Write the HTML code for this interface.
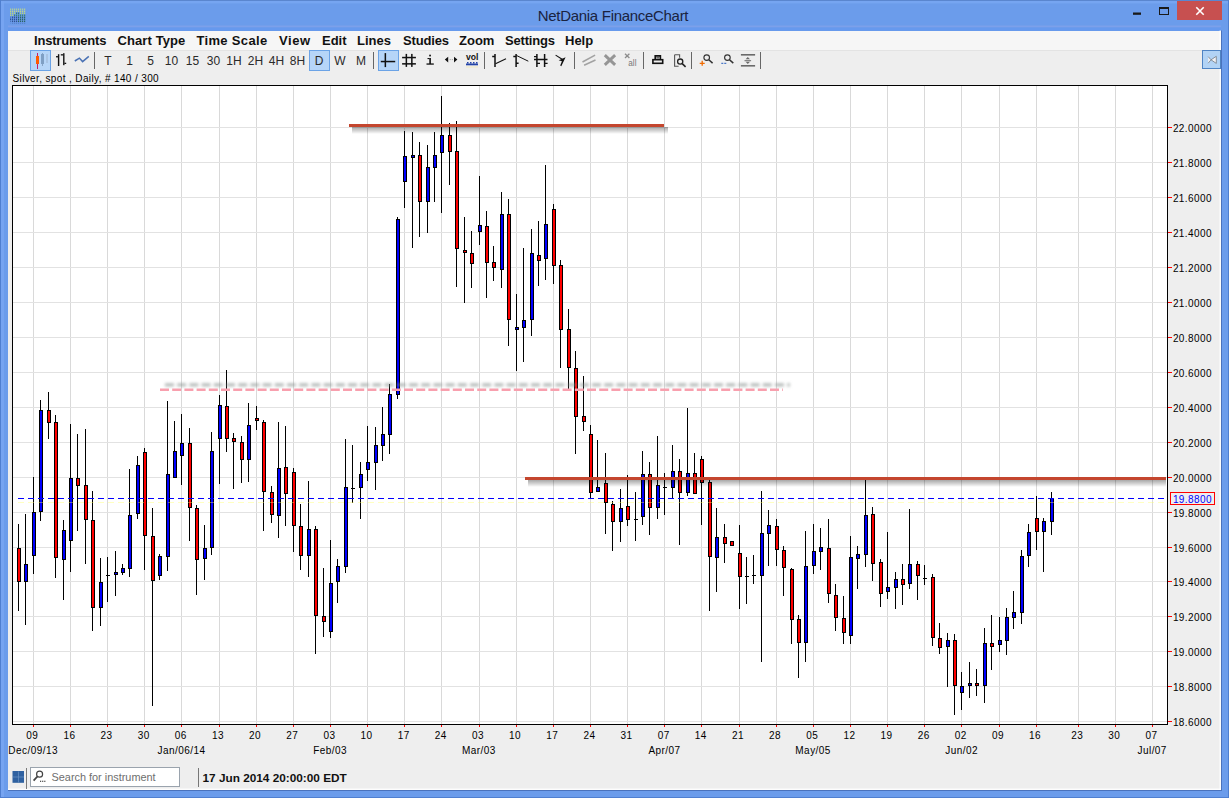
<!DOCTYPE html>
<html><head><meta charset="utf-8"><title>NetDania FinanceChart</title>
<style>
html,body{margin:0;padding:0;background:#6b9ceb;}
body{width:1229px;height:798px;position:relative;overflow:hidden;font-family:"Liberation Sans",Arial,sans-serif;}
#win{position:absolute;left:0;top:0;width:1229px;height:798px;background:#6b9ceb;}
#topedge{position:absolute;left:0;top:0;width:1229px;height:1px;background:#5a86cf;}
#title{position:absolute;left:-1.5px;top:6.7px;width:1229px;text-align:center;font-size:15px;letter-spacing:-0.3px;color:#1a2340;line-height:18px;}
#content{position:absolute;left:8px;top:30.5px;width:1213px;height:759.5px;background:#eeeeee;}
#menubar{position:absolute;left:8px;top:30.5px;width:1213px;height:19px;background:#f6f6f6;border-bottom:1px solid #e3e3e3;}
.mi{position:absolute;top:33.7px;font-weight:bold;font-size:13px;line-height:14px;color:#111;white-space:nowrap;}
.tb{position:absolute;top:53px;width:24px;text-align:center;font-size:12px;line-height:16px;color:#2a2a2a;white-space:nowrap;}
.sel{position:absolute;background:#b6d5f8;border:1px solid #6ba3e6;box-sizing:border-box;}
.sep{position:absolute;width:1px;background:#8a8a8a;}
#lbl{position:absolute;left:12.5px;top:72.5px;font-size:10px;letter-spacing:0.37px;line-height:12px;color:#000;white-space:nowrap;}
#search{position:absolute;left:30px;top:767px;width:150px;height:20px;box-sizing:border-box;background:#fff;border:1px solid #9aa3ad;}
#search span{position:absolute;left:20.5px;top:3px;font-size:10.9px;line-height:13px;color:#6e6e6e;white-space:nowrap;}
#status{position:absolute;left:202.5px;top:771px;font-weight:bold;font-size:11.8px;line-height:14px;color:#111;white-space:nowrap;}
</style></head><body>
<div id="win"></div><div id="topedge"></div>
<div id="title">NetDania FinanceChart</div>
<div id="content"></div>
<div id="menubar"></div>
<span class="mi" style="left:34px;letter-spacing:-0.2px">Instruments</span><span class="mi" style="left:117.5px;letter-spacing:0.1px">Chart Type</span><span class="mi" style="left:196.5px;letter-spacing:0.33px">Time Scale</span><span class="mi" style="left:279px;letter-spacing:0.6px">View</span><span class="mi" style="left:322px;letter-spacing:0px">Edit</span><span class="mi" style="left:357px;letter-spacing:0px">Lines</span><span class="mi" style="left:403px;letter-spacing:-0.15px">Studies</span><span class="mi" style="left:459px;letter-spacing:0px">Zoom</span><span class="mi" style="left:505px;letter-spacing:-0.2px">Settings</span><span class="mi" style="left:565px;letter-spacing:0px">Help</span>
<div class="sel" style="left:30px;top:50px;width:21px;height:21px"></div>
<div class="sel" style="left:309px;top:50px;width:21px;height:21px"></div>
<div class="sel" style="left:378px;top:50px;width:21px;height:21px"></div>
<div class="sel" style="left:1202px;top:50px;width:19px;height:19px;border-color:#4f84c4;background:#b2d3f5"></div>
<span class="tb" style="left:96px">T</span><span class="tb" style="left:117.5px">1</span><span class="tb" style="left:138.5px">5</span><span class="tb" style="left:159.5px">10</span><span class="tb" style="left:180.5px">15</span><span class="tb" style="left:201.5px">30</span><span class="tb" style="left:222px">1H</span><span class="tb" style="left:243.5px">2H</span><span class="tb" style="left:264.5px">4H</span><span class="tb" style="left:285.5px">8H</span><span class="tb" style="left:307px">D</span><span class="tb" style="left:328px">W</span><span class="tb" style="left:349px">M</span>
<div id="lbl">Silver, spot , Daily, # 140 / 300</div>
<svg width="1229" height="798" viewBox="0 0 1229 798" style="position:absolute;left:0;top:0">
<defs><linearGradient id="sh" x1="0" y1="0" x2="0" y2="1"><stop offset="0" stop-color="#000" stop-opacity="0.34"/><stop offset="0.55" stop-color="#000" stop-opacity="0.16"/><stop offset="1" stop-color="#000" stop-opacity="0"/></linearGradient><filter id="bl" filterUnits="userSpaceOnUse" x="150" y="375" width="660" height="20"><feGaussianBlur stdDeviation="1.5"/></filter></defs>
<rect x="12" y="85" width="1156" height="640" fill="#fff"/>
<g shape-rendering="crispEdges" stroke="#d9d9d9" stroke-width="1"><line x1="33.5" y1="86" x2="33.5" y2="724"/><line x1="70.5" y1="86" x2="70.5" y2="724"/><line x1="107.5" y1="86" x2="107.5" y2="724"/><line x1="144.5" y1="86" x2="144.5" y2="724"/><line x1="181.5" y1="86" x2="181.5" y2="724"/><line x1="219.5" y1="86" x2="219.5" y2="724"/><line x1="256.5" y1="86" x2="256.5" y2="724"/><line x1="293.5" y1="86" x2="293.5" y2="724"/><line x1="330.5" y1="86" x2="330.5" y2="724"/><line x1="367.5" y1="86" x2="367.5" y2="724"/><line x1="404.5" y1="86" x2="404.5" y2="724"/><line x1="441.5" y1="86" x2="441.5" y2="724"/><line x1="479.5" y1="86" x2="479.5" y2="724"/><line x1="516.5" y1="86" x2="516.5" y2="724"/><line x1="553.5" y1="86" x2="553.5" y2="724"/><line x1="590.5" y1="86" x2="590.5" y2="724"/><line x1="627.5" y1="86" x2="627.5" y2="724"/><line x1="664.5" y1="86" x2="664.5" y2="724"/><line x1="701.5" y1="86" x2="701.5" y2="724"/><line x1="739.5" y1="86" x2="739.5" y2="724"/><line x1="776.5" y1="86" x2="776.5" y2="724"/><line x1="813.5" y1="86" x2="813.5" y2="724"/><line x1="850.5" y1="86" x2="850.5" y2="724"/><line x1="887.5" y1="86" x2="887.5" y2="724"/><line x1="924.5" y1="86" x2="924.5" y2="724"/><line x1="961.5" y1="86" x2="961.5" y2="724"/><line x1="999.5" y1="86" x2="999.5" y2="724"/><line x1="1036.5" y1="86" x2="1036.5" y2="724"/><line x1="1078.5" y1="86" x2="1078.5" y2="724"/><line x1="1115.5" y1="86" x2="1115.5" y2="724"/><line x1="1152.5" y1="86" x2="1152.5" y2="724"/></g><g shape-rendering="crispEdges" stroke="#e2e2e2" stroke-width="1"><line x1="13" y1="127.5" x2="1167" y2="127.5"/><line x1="13" y1="162.5" x2="1167" y2="162.5"/><line x1="13" y1="197.5" x2="1167" y2="197.5"/><line x1="13" y1="232.5" x2="1167" y2="232.5"/><line x1="13" y1="267.5" x2="1167" y2="267.5"/><line x1="13" y1="302.5" x2="1167" y2="302.5"/><line x1="13" y1="337.5" x2="1167" y2="337.5"/><line x1="13" y1="372.5" x2="1167" y2="372.5"/><line x1="13" y1="407.5" x2="1167" y2="407.5"/><line x1="13" y1="442.5" x2="1167" y2="442.5"/><line x1="13" y1="477.5" x2="1167" y2="477.5"/><line x1="13" y1="512.5" x2="1167" y2="512.5"/><line x1="13" y1="547.5" x2="1167" y2="547.5"/><line x1="13" y1="581.5" x2="1167" y2="581.5"/><line x1="13" y1="616.5" x2="1167" y2="616.5"/><line x1="13" y1="651.5" x2="1167" y2="651.5"/><line x1="13" y1="686.5" x2="1167" y2="686.5"/><line x1="13" y1="721.5" x2="1167" y2="721.5"/></g>
<g shape-rendering="crispEdges">
<g fill="#000"><rect x="18" y="524" width="1" height="87"/><rect x="25" y="514" width="1" height="111"/><rect x="33" y="477" width="1" height="97"/><rect x="40" y="400" width="1" height="121"/><rect x="48" y="392" width="1" height="47"/><rect x="55" y="415" width="1" height="163"/><rect x="63" y="520" width="1" height="80"/><rect x="70" y="424" width="1" height="148"/><rect x="77" y="434" width="1" height="97"/><rect x="85" y="429" width="1" height="135"/><rect x="92" y="491" width="1" height="140"/><rect x="100" y="558" width="1" height="68"/><rect x="107" y="557" width="1" height="45"/><rect x="115" y="551" width="1" height="45"/><rect x="122" y="564" width="1" height="11"/><rect x="129" y="469" width="1" height="108"/><rect x="137" y="456" width="1" height="63"/><rect x="144" y="448" width="1" height="122"/><rect x="152" y="508" width="1" height="198"/><rect x="159" y="554" width="1" height="26"/><rect x="167" y="401" width="1" height="170"/><rect x="174" y="421" width="1" height="57"/><rect x="181" y="414" width="1" height="71"/><rect x="189" y="428" width="1" height="113"/><rect x="196" y="505" width="1" height="90"/><rect x="204" y="525" width="1" height="55"/><rect x="211" y="432" width="1" height="123"/><rect x="219" y="395" width="1" height="89"/><rect x="226" y="370" width="1" height="82"/><rect x="233" y="433" width="1" height="56"/><rect x="241" y="436" width="1" height="47"/><rect x="248" y="403" width="1" height="79"/><rect x="256" y="406" width="1" height="24"/><rect x="263" y="420" width="1" height="111"/><rect x="271" y="486" width="1" height="37"/><rect x="278" y="422" width="1" height="116"/><rect x="285" y="426" width="1" height="100"/><rect x="293" y="468" width="1" height="84"/><rect x="300" y="504" width="1" height="66"/><rect x="308" y="481" width="1" height="96"/><rect x="315" y="526" width="1" height="128"/><rect x="323" y="568" width="1" height="69"/><rect x="330" y="540" width="1" height="98"/><rect x="337" y="559" width="1" height="44"/><rect x="345" y="439" width="1" height="134"/><rect x="352" y="445" width="1" height="58"/><rect x="360" y="462" width="1" height="57"/><rect x="367" y="426" width="1" height="55"/><rect x="375" y="427" width="1" height="63"/><rect x="382" y="407" width="1" height="54"/><rect x="389" y="384" width="1" height="70"/><rect x="397" y="217" width="1" height="182"/><rect x="404" y="131" width="1" height="77"/><rect x="412" y="132" width="1" height="116"/><rect x="419" y="142" width="1" height="95"/><rect x="427" y="145" width="1" height="88"/><rect x="434" y="132" width="1" height="70"/><rect x="441" y="96" width="1" height="117"/><rect x="449" y="123" width="1" height="62"/><rect x="456" y="121" width="1" height="166"/><rect x="464" y="217" width="1" height="86"/><rect x="471" y="231" width="1" height="57"/><rect x="479" y="176" width="1" height="69"/><rect x="486" y="211" width="1" height="87"/><rect x="493" y="246" width="1" height="35"/><rect x="501" y="192" width="1" height="96"/><rect x="508" y="199" width="1" height="147"/><rect x="516" y="294" width="1" height="77"/><rect x="523" y="248" width="1" height="114"/><rect x="531" y="229" width="1" height="107"/><rect x="538" y="221" width="1" height="65"/><rect x="545" y="165" width="1" height="115"/><rect x="553" y="204" width="1" height="80"/><rect x="560" y="260" width="1" height="108"/><rect x="568" y="309" width="1" height="81"/><rect x="575" y="351" width="1" height="103"/><rect x="583" y="376" width="1" height="55"/><rect x="590" y="425" width="1" height="74"/><rect x="597" y="440" width="1" height="52"/><rect x="605" y="453" width="1" height="81"/><rect x="612" y="501" width="1" height="50"/><rect x="620" y="489" width="1" height="53"/><rect x="627" y="475" width="1" height="51"/><rect x="635" y="492" width="1" height="49"/><rect x="642" y="451" width="1" height="74"/><rect x="649" y="462" width="1" height="73"/><rect x="657" y="436" width="1" height="83"/><rect x="664" y="473" width="1" height="42"/><rect x="672" y="445" width="1" height="53"/><rect x="679" y="459" width="1" height="86"/><rect x="687" y="408" width="1" height="88"/><rect x="694" y="453" width="1" height="41"/><rect x="701" y="456" width="1" height="69"/><rect x="709" y="480" width="1" height="131"/><rect x="716" y="508" width="1" height="84"/><rect x="724" y="524" width="1" height="39"/><rect x="731" y="541" width="1" height="5"/><rect x="739" y="525" width="1" height="84"/><rect x="746" y="557" width="1" height="47"/><rect x="753" y="555" width="1" height="29"/><rect x="761" y="491" width="1" height="171"/><rect x="768" y="510" width="1" height="56"/><rect x="776" y="519" width="1" height="47"/><rect x="783" y="546" width="1" height="50"/><rect x="791" y="568" width="1" height="76"/><rect x="798" y="615" width="1" height="63"/><rect x="805" y="531" width="1" height="131"/><rect x="813" y="524" width="1" height="50"/><rect x="820" y="528" width="1" height="42"/><rect x="828" y="519" width="1" height="84"/><rect x="835" y="584" width="1" height="47"/><rect x="843" y="596" width="1" height="48"/><rect x="850" y="536" width="1" height="108"/><rect x="857" y="546" width="1" height="43"/><rect x="865" y="480" width="1" height="87"/><rect x="872" y="507" width="1" height="74"/><rect x="880" y="559" width="1" height="48"/><rect x="887" y="532" width="1" height="67"/><rect x="895" y="572" width="1" height="37"/><rect x="902" y="564" width="1" height="41"/><rect x="909" y="509" width="1" height="80"/><rect x="917" y="561" width="1" height="39"/><rect x="924" y="565" width="1" height="20"/><rect x="932" y="574" width="1" height="72"/><rect x="939" y="623" width="1" height="31"/><rect x="947" y="633" width="1" height="54"/><rect x="954" y="634" width="1" height="81"/><rect x="961" y="672" width="1" height="38"/><rect x="969" y="662" width="1" height="36"/><rect x="976" y="669" width="1" height="27"/><rect x="984" y="628" width="1" height="75"/><rect x="991" y="615" width="1" height="55"/><rect x="999" y="617" width="1" height="35"/><rect x="1006" y="608" width="1" height="47"/><rect x="1013" y="591" width="1" height="38"/><rect x="1021" y="550" width="1" height="74"/><rect x="1028" y="524" width="1" height="43"/><rect x="1036" y="496" width="1" height="54"/><rect x="1043" y="518" width="1" height="54"/><rect x="1051" y="492" width="1" height="43"/><rect x="17" y="548" width="4" height="34"/><rect x="24" y="564" width="4" height="18"/><rect x="32" y="512" width="4" height="44"/><rect x="39" y="410" width="4" height="102"/><rect x="47" y="410" width="4" height="13"/><rect x="54" y="422" width="4" height="136"/><rect x="62" y="530" width="4" height="30"/><rect x="69" y="478" width="4" height="63"/><rect x="76" y="478" width="4" height="8"/><rect x="84" y="485" width="4" height="35"/><rect x="91" y="520" width="4" height="88"/><rect x="99" y="582" width="4" height="26"/><rect x="106" y="575" width="4" height="1"/><rect x="114" y="572" width="4" height="3"/><rect x="121" y="568" width="4" height="5"/><rect x="128" y="515" width="4" height="54"/><rect x="136" y="465" width="4" height="49"/><rect x="143" y="452" width="4" height="84"/><rect x="151" y="536" width="4" height="45"/><rect x="158" y="556" width="4" height="20"/><rect x="166" y="474" width="4" height="83"/><rect x="173" y="451" width="4" height="27"/><rect x="180" y="443" width="4" height="13"/><rect x="188" y="443" width="4" height="65"/><rect x="195" y="508" width="4" height="52"/><rect x="203" y="548" width="4" height="11"/><rect x="210" y="451" width="4" height="97"/><rect x="218" y="405" width="4" height="34"/><rect x="225" y="406" width="4" height="33"/><rect x="232" y="438" width="4" height="4"/><rect x="240" y="442" width="4" height="18"/><rect x="247" y="425" width="4" height="35"/><rect x="255" y="418" width="4" height="3"/><rect x="262" y="422" width="4" height="70"/><rect x="270" y="492" width="4" height="23"/><rect x="277" y="468" width="4" height="48"/><rect x="284" y="467" width="4" height="27"/><rect x="292" y="472" width="4" height="54"/><rect x="299" y="526" width="4" height="30"/><rect x="307" y="529" width="4" height="27"/><rect x="314" y="529" width="4" height="87"/><rect x="322" y="616" width="4" height="6"/><rect x="329" y="583" width="4" height="49"/><rect x="336" y="566" width="4" height="16"/><rect x="344" y="487" width="4" height="80"/><rect x="351" y="488" width="4" height="1"/><rect x="359" y="474" width="4" height="14"/><rect x="366" y="462" width="4" height="8"/><rect x="374" y="445" width="4" height="18"/><rect x="381" y="434" width="4" height="12"/><rect x="388" y="394" width="4" height="41"/><rect x="396" y="219" width="4" height="176"/><rect x="403" y="156" width="4" height="26"/><rect x="411" y="155" width="4" height="3"/><rect x="418" y="155" width="4" height="47"/><rect x="426" y="167" width="4" height="35"/><rect x="433" y="155" width="4" height="13"/><rect x="440" y="135" width="4" height="18"/><rect x="448" y="135" width="4" height="17"/><rect x="455" y="151" width="4" height="98"/><rect x="463" y="250" width="4" height="3"/><rect x="470" y="253" width="4" height="11"/><rect x="478" y="225" width="4" height="7"/><rect x="485" y="226" width="4" height="37"/><rect x="492" y="262" width="4" height="6"/><rect x="500" y="214" width="4" height="56"/><rect x="507" y="214" width="4" height="106"/><rect x="515" y="327" width="4" height="3"/><rect x="522" y="320" width="4" height="8"/><rect x="530" y="253" width="4" height="67"/><rect x="537" y="255" width="4" height="6"/><rect x="544" y="224" width="4" height="35"/><rect x="552" y="209" width="4" height="57"/><rect x="559" y="265" width="4" height="65"/><rect x="567" y="329" width="4" height="39"/><rect x="574" y="368" width="4" height="49"/><rect x="582" y="416" width="4" height="6"/><rect x="589" y="434" width="4" height="59"/><rect x="596" y="487" width="4" height="5"/><rect x="604" y="483" width="4" height="20"/><rect x="611" y="504" width="4" height="18"/><rect x="619" y="508" width="4" height="14"/><rect x="626" y="506" width="4" height="14"/><rect x="634" y="519" width="4" height="1"/><rect x="641" y="474" width="4" height="43"/><rect x="648" y="474" width="4" height="34"/><rect x="656" y="485" width="4" height="23"/><rect x="663" y="487" width="4" height="1"/><rect x="671" y="471" width="4" height="17"/><rect x="678" y="471" width="4" height="22"/><rect x="686" y="473" width="4" height="20"/><rect x="693" y="473" width="4" height="21"/><rect x="700" y="459" width="4" height="24"/><rect x="708" y="482" width="4" height="75"/><rect x="715" y="537" width="4" height="21"/><rect x="723" y="537" width="4" height="7"/><rect x="730" y="541" width="4" height="5"/><rect x="738" y="553" width="4" height="24"/><rect x="745" y="576" width="4" height="1"/><rect x="752" y="575" width="4" height="1"/><rect x="760" y="533" width="4" height="43"/><rect x="767" y="525" width="4" height="9"/><rect x="775" y="526" width="4" height="24"/><rect x="782" y="550" width="4" height="18"/><rect x="790" y="569" width="4" height="51"/><rect x="797" y="619" width="4" height="24"/><rect x="804" y="566" width="4" height="77"/><rect x="812" y="551" width="4" height="15"/><rect x="819" y="547" width="4" height="5"/><rect x="827" y="548" width="4" height="46"/><rect x="834" y="595" width="4" height="23"/><rect x="842" y="618" width="4" height="15"/><rect x="849" y="557" width="4" height="79"/><rect x="856" y="554" width="4" height="5"/><rect x="864" y="515" width="4" height="40"/><rect x="871" y="514" width="4" height="50"/><rect x="879" y="562" width="4" height="32"/><rect x="886" y="587" width="4" height="5"/><rect x="894" y="579" width="4" height="9"/><rect x="901" y="579" width="4" height="6"/><rect x="908" y="564" width="4" height="20"/><rect x="916" y="564" width="4" height="12"/><rect x="923" y="578" width="4" height="1"/><rect x="931" y="577" width="4" height="61"/><rect x="938" y="638" width="4" height="10"/><rect x="946" y="640" width="4" height="7"/><rect x="953" y="640" width="4" height="46"/><rect x="960" y="686" width="4" height="7"/><rect x="968" y="683" width="4" height="3"/><rect x="975" y="683" width="4" height="3"/><rect x="983" y="643" width="4" height="43"/><rect x="990" y="643" width="4" height="4"/><rect x="998" y="640" width="4" height="5"/><rect x="1005" y="617" width="4" height="24"/><rect x="1012" y="612" width="4" height="6"/><rect x="1020" y="556" width="4" height="57"/><rect x="1027" y="532" width="4" height="24"/><rect x="1035" y="518" width="4" height="14"/><rect x="1042" y="521" width="4" height="11"/><rect x="1050" y="498" width="4" height="24"/></g>
<g fill="#ff0000"><rect x="18" y="549" width="2" height="32"/><rect x="48" y="411" width="2" height="11"/><rect x="55" y="423" width="2" height="134"/><rect x="77" y="479" width="2" height="6"/><rect x="85" y="486" width="2" height="33"/><rect x="92" y="521" width="2" height="86"/><rect x="144" y="453" width="2" height="82"/><rect x="152" y="537" width="2" height="43"/><rect x="189" y="444" width="2" height="63"/><rect x="196" y="509" width="2" height="50"/><rect x="226" y="407" width="2" height="31"/><rect x="233" y="439" width="2" height="2"/><rect x="241" y="443" width="2" height="16"/><rect x="256" y="419" width="2" height="1"/><rect x="263" y="423" width="2" height="68"/><rect x="271" y="493" width="2" height="21"/><rect x="285" y="468" width="2" height="25"/><rect x="293" y="473" width="2" height="52"/><rect x="300" y="527" width="2" height="28"/><rect x="315" y="530" width="2" height="85"/><rect x="323" y="617" width="2" height="4"/><rect x="419" y="156" width="2" height="45"/><rect x="449" y="136" width="2" height="15"/><rect x="456" y="152" width="2" height="96"/><rect x="464" y="251" width="2" height="1"/><rect x="471" y="254" width="2" height="9"/><rect x="486" y="227" width="2" height="35"/><rect x="493" y="263" width="2" height="4"/><rect x="508" y="215" width="2" height="104"/><rect x="538" y="256" width="2" height="4"/><rect x="553" y="210" width="2" height="55"/><rect x="560" y="266" width="2" height="63"/><rect x="568" y="330" width="2" height="37"/><rect x="575" y="369" width="2" height="47"/><rect x="583" y="417" width="2" height="4"/><rect x="590" y="435" width="2" height="57"/><rect x="605" y="484" width="2" height="18"/><rect x="612" y="505" width="2" height="16"/><rect x="627" y="507" width="2" height="12"/><rect x="649" y="475" width="2" height="32"/><rect x="679" y="472" width="2" height="20"/><rect x="694" y="474" width="2" height="19"/><rect x="701" y="460" width="2" height="22"/><rect x="709" y="483" width="2" height="73"/><rect x="724" y="538" width="2" height="5"/><rect x="731" y="542" width="2" height="3"/><rect x="739" y="554" width="2" height="22"/><rect x="776" y="527" width="2" height="22"/><rect x="783" y="551" width="2" height="16"/><rect x="791" y="570" width="2" height="49"/><rect x="798" y="620" width="2" height="22"/><rect x="828" y="549" width="2" height="44"/><rect x="835" y="596" width="2" height="21"/><rect x="843" y="619" width="2" height="13"/><rect x="872" y="515" width="2" height="48"/><rect x="880" y="563" width="2" height="30"/><rect x="902" y="580" width="2" height="4"/><rect x="917" y="565" width="2" height="10"/><rect x="932" y="578" width="2" height="59"/><rect x="939" y="639" width="2" height="8"/><rect x="954" y="641" width="2" height="44"/><rect x="976" y="684" width="2" height="1"/><rect x="991" y="644" width="2" height="2"/><rect x="1036" y="519" width="2" height="12"/></g>
<g fill="#0000ff"><rect x="25" y="565" width="2" height="16"/><rect x="33" y="513" width="2" height="42"/><rect x="40" y="411" width="2" height="100"/><rect x="63" y="531" width="2" height="28"/><rect x="70" y="479" width="2" height="61"/><rect x="100" y="583" width="2" height="24"/><rect x="115" y="573" width="2" height="1"/><rect x="122" y="569" width="2" height="3"/><rect x="129" y="516" width="2" height="52"/><rect x="137" y="466" width="2" height="47"/><rect x="159" y="557" width="2" height="18"/><rect x="167" y="475" width="2" height="81"/><rect x="174" y="452" width="2" height="25"/><rect x="181" y="444" width="2" height="11"/><rect x="204" y="549" width="2" height="9"/><rect x="211" y="452" width="2" height="95"/><rect x="219" y="406" width="2" height="32"/><rect x="248" y="426" width="2" height="33"/><rect x="278" y="469" width="2" height="46"/><rect x="308" y="530" width="2" height="25"/><rect x="330" y="584" width="2" height="47"/><rect x="337" y="567" width="2" height="14"/><rect x="345" y="488" width="2" height="78"/><rect x="360" y="475" width="2" height="12"/><rect x="367" y="463" width="2" height="6"/><rect x="375" y="446" width="2" height="16"/><rect x="382" y="435" width="2" height="10"/><rect x="389" y="395" width="2" height="39"/><rect x="397" y="220" width="2" height="174"/><rect x="404" y="157" width="2" height="24"/><rect x="412" y="156" width="2" height="1"/><rect x="427" y="168" width="2" height="33"/><rect x="434" y="156" width="2" height="11"/><rect x="441" y="136" width="2" height="16"/><rect x="479" y="226" width="2" height="5"/><rect x="501" y="215" width="2" height="54"/><rect x="516" y="328" width="2" height="1"/><rect x="523" y="321" width="2" height="6"/><rect x="531" y="254" width="2" height="65"/><rect x="545" y="225" width="2" height="33"/><rect x="597" y="488" width="2" height="3"/><rect x="620" y="509" width="2" height="12"/><rect x="642" y="475" width="2" height="41"/><rect x="657" y="486" width="2" height="21"/><rect x="672" y="472" width="2" height="15"/><rect x="687" y="474" width="2" height="18"/><rect x="716" y="538" width="2" height="19"/><rect x="761" y="534" width="2" height="41"/><rect x="768" y="526" width="2" height="7"/><rect x="805" y="567" width="2" height="75"/><rect x="813" y="552" width="2" height="13"/><rect x="820" y="548" width="2" height="3"/><rect x="850" y="558" width="2" height="77"/><rect x="857" y="555" width="2" height="3"/><rect x="865" y="516" width="2" height="38"/><rect x="887" y="588" width="2" height="3"/><rect x="895" y="580" width="2" height="7"/><rect x="909" y="565" width="2" height="18"/><rect x="947" y="641" width="2" height="5"/><rect x="961" y="687" width="2" height="5"/><rect x="969" y="684" width="2" height="1"/><rect x="984" y="644" width="2" height="41"/><rect x="999" y="641" width="2" height="3"/><rect x="1006" y="618" width="2" height="22"/><rect x="1013" y="613" width="2" height="4"/><rect x="1021" y="557" width="2" height="55"/><rect x="1028" y="533" width="2" height="22"/><rect x="1043" y="522" width="2" height="9"/><rect x="1051" y="499" width="2" height="22"/></g>
</g>
<rect x="352" y="127" width="316" height="7" fill="url(#sh)"/>
<rect x="349" y="124" width="315" height="3" fill="#c4462e"/>
<rect x="528" y="480" width="638" height="7" fill="url(#sh)"/>
<rect x="525" y="477" width="641" height="3" fill="#c4462e"/>
<line x1="165" y1="384.9" x2="790" y2="384.9" stroke="#868f8c" stroke-opacity="0.6" stroke-width="3.2" stroke-dasharray="9 3.2" filter="url(#bl)"/>
<line x1="160" y1="389.7" x2="783" y2="389.7" stroke="#f8a0ae" stroke-width="2.6" stroke-dasharray="9 3.2"/>
<line x1="18" y1="502.5" x2="1166" y2="502.5" stroke="#ffff66" stroke-opacity="0.4" stroke-width="1" stroke-dasharray="6 4" shape-rendering="crispEdges"/>
<line x1="18" y1="498.5" x2="1166" y2="498.5" stroke="#0000ff" stroke-width="1" stroke-dasharray="6 4" shape-rendering="crispEdges"/>
<g shape-rendering="crispEdges" fill="#000"><rect x="12" y="85" width="1156" height="1"/><rect x="12" y="724" width="1156" height="1"/><rect x="12" y="85" width="1" height="640"/><rect x="1167" y="85" width="1" height="640"/></g>
<g shape-rendering="crispEdges" fill="#ff0000"><rect x="1168" y="127" width="4" height="1"/><rect x="1168" y="162" width="4" height="1"/><rect x="1168" y="197" width="4" height="1"/><rect x="1168" y="232" width="4" height="1"/><rect x="1168" y="267" width="4" height="1"/><rect x="1168" y="302" width="4" height="1"/><rect x="1168" y="337" width="4" height="1"/><rect x="1168" y="372" width="4" height="1"/><rect x="1168" y="407" width="4" height="1"/><rect x="1168" y="442" width="4" height="1"/><rect x="1168" y="477" width="4" height="1"/><rect x="1168" y="512" width="4" height="1"/><rect x="1168" y="547" width="4" height="1"/><rect x="1168" y="581" width="4" height="1"/><rect x="1168" y="616" width="4" height="1"/><rect x="1168" y="651" width="4" height="1"/><rect x="1168" y="686" width="4" height="1"/><rect x="1168" y="721" width="4" height="1"/><rect x="33" y="725" width="1" height="2"/><rect x="70" y="725" width="1" height="2"/><rect x="107" y="725" width="1" height="2"/><rect x="144" y="725" width="1" height="2"/><rect x="181" y="725" width="1" height="2"/><rect x="219" y="725" width="1" height="2"/><rect x="256" y="725" width="1" height="2"/><rect x="293" y="725" width="1" height="2"/><rect x="330" y="725" width="1" height="2"/><rect x="367" y="725" width="1" height="2"/><rect x="404" y="725" width="1" height="2"/><rect x="441" y="725" width="1" height="2"/><rect x="479" y="725" width="1" height="2"/><rect x="516" y="725" width="1" height="2"/><rect x="553" y="725" width="1" height="2"/><rect x="590" y="725" width="1" height="2"/><rect x="627" y="725" width="1" height="2"/><rect x="664" y="725" width="1" height="2"/><rect x="701" y="725" width="1" height="2"/><rect x="739" y="725" width="1" height="2"/><rect x="776" y="725" width="1" height="2"/><rect x="813" y="725" width="1" height="2"/><rect x="850" y="725" width="1" height="2"/><rect x="887" y="725" width="1" height="2"/><rect x="924" y="725" width="1" height="2"/><rect x="961" y="725" width="1" height="2"/><rect x="999" y="725" width="1" height="2"/><rect x="1036" y="725" width="1" height="2"/><rect x="1078" y="725" width="1" height="2"/><rect x="1115" y="725" width="1" height="2"/><rect x="1152" y="725" width="1" height="2"/></g>
<g font-family="Liberation Sans, Arial, sans-serif" font-size="10" letter-spacing="0.42" fill="#000"><text x="1172.9" y="132.0">22.0000</text><text x="1172.9" y="167.0">21.8000</text><text x="1172.9" y="202.0">21.6000</text><text x="1172.9" y="237.0">21.4000</text><text x="1172.9" y="272.0">21.2000</text><text x="1172.9" y="307.0">21.0000</text><text x="1172.9" y="342.0">20.8000</text><text x="1172.9" y="377.0">20.6000</text><text x="1172.9" y="412.0">20.4000</text><text x="1172.9" y="447.0">20.2000</text><text x="1172.9" y="482.0">20.0000</text><text x="1172.9" y="517.0">19.8000</text><text x="1172.9" y="552.0">19.6000</text><text x="1172.9" y="586.0">19.4000</text><text x="1172.9" y="621.0">19.2000</text><text x="1172.9" y="656.0">19.0000</text><text x="1172.9" y="691.0">18.8000</text><text x="1172.9" y="726.0">18.6000</text><text x="32.3" y="738.6" text-anchor="middle">09</text><text x="33.1" y="753.6" text-anchor="middle" letter-spacing="0.45">Dec/09/13</text><text x="69.4" y="738.6" text-anchor="middle">16</text><text x="106.5" y="738.6" text-anchor="middle">23</text><text x="143.7" y="738.6" text-anchor="middle">30</text><text x="180.8" y="738.6" text-anchor="middle">06</text><text x="181.6" y="753.6" text-anchor="middle" letter-spacing="0.45">Jan/06/14</text><text x="218.0" y="738.6" text-anchor="middle">13</text><text x="255.1" y="738.6" text-anchor="middle">20</text><text x="292.3" y="738.6" text-anchor="middle">27</text><text x="329.4" y="738.6" text-anchor="middle">03</text><text x="330.2" y="753.6" text-anchor="middle" letter-spacing="0.45">Feb/03</text><text x="366.5" y="738.6" text-anchor="middle">10</text><text x="403.7" y="738.6" text-anchor="middle">17</text><text x="440.8" y="738.6" text-anchor="middle">24</text><text x="478.0" y="738.6" text-anchor="middle">03</text><text x="478.8" y="753.6" text-anchor="middle" letter-spacing="0.45">Mar/03</text><text x="515.1" y="738.6" text-anchor="middle">10</text><text x="552.3" y="738.6" text-anchor="middle">17</text><text x="589.4" y="738.6" text-anchor="middle">24</text><text x="626.5" y="738.6" text-anchor="middle">31</text><text x="663.7" y="738.6" text-anchor="middle">07</text><text x="664.5" y="753.6" text-anchor="middle" letter-spacing="0.45">Apr/07</text><text x="700.8" y="738.6" text-anchor="middle">14</text><text x="738.0" y="738.6" text-anchor="middle">21</text><text x="775.1" y="738.6" text-anchor="middle">28</text><text x="812.3" y="738.6" text-anchor="middle">05</text><text x="813.1" y="753.6" text-anchor="middle" letter-spacing="0.45">May/05</text><text x="849.4" y="738.6" text-anchor="middle">12</text><text x="886.5" y="738.6" text-anchor="middle">19</text><text x="923.7" y="738.6" text-anchor="middle">26</text><text x="960.8" y="738.6" text-anchor="middle">02</text><text x="961.6" y="753.6" text-anchor="middle" letter-spacing="0.45">Jun/02</text><text x="998.0" y="738.6" text-anchor="middle">09</text><text x="1035.1" y="738.6" text-anchor="middle">16</text><text x="1077.2" y="738.6" text-anchor="middle">23</text><text x="1114.2" y="738.6" text-anchor="middle">30</text><text x="1151.4" y="738.6" text-anchor="middle">07</text><text x="1152.2" y="753.6" text-anchor="middle" letter-spacing="0.45">Jul/07</text></g>
<rect x="1170.5" y="492.5" width="44" height="12" fill="#eeeeee" stroke="#ff0000" stroke-width="1" shape-rendering="crispEdges"/>
<text x="1172.9" y="503.0" font-family="Liberation Sans, Arial, sans-serif" font-size="10" letter-spacing="0.42" fill="#0000ff">19.8800</text>
</svg>
<div id="search"><span>Search for instrument</span></div>
<div id="status">17 Jun 2014 20:00:00 EDT</div>
<svg width="1229" height="798" viewBox="0 0 1229 798" style="position:absolute;left:0;top:0;pointer-events:none">
<!-- window border shading -->
<rect x="1" y="1" width="1227" height="2.500" fill="#7aa8f3" opacity="0.75"/><rect x="1" y="1" width="3" height="796" fill="#7aa8f3" opacity="0.7"/><rect x="8" y="25.500" width="1213" height="2" fill="#8aa4ea" opacity="0.55"/>
<rect x="8" y="27.500" width="1213" height="3" fill="#6298f0" opacity="0.6"/>
<rect x="1228" y="0" width="1" height="798" fill="#4f7fd0"/>
<rect x="0" y="797" width="1229" height="1" fill="#4f7fd0"/>
<rect x="0" y="0" width="1" height="798" fill="#4f7fd0"/>
<rect x="1219.500" y="30.500" width="1.500" height="19.500" fill="#fff" opacity="0.85"/><rect x="1219.500" y="69" width="1.500" height="721" fill="#fff" opacity="0.85"/><rect x="8" y="788.500" width="1213" height="1.500" fill="#fff" opacity="0.85"/>
<rect x="1221" y="30.500" width="1" height="760.500" fill="#4a72bc"/><rect x="8" y="790" width="1214" height="1" fill="#4a72bc"/>
<!-- app icon -->
<g><rect x="10.0" y="8.6" width="1.2" height="1.2" fill="#d6ea70" opacity="0.8"/><rect x="12.0" y="8.6" width="1.2" height="1.2" fill="#d6ea70" opacity="0.8"/><rect x="14.0" y="8.6" width="1.2" height="1.2" fill="#d6ea70" opacity="0.8"/><rect x="16.0" y="8.6" width="1.2" height="1.2" fill="#d6ea70" opacity="0.8"/><rect x="18.0" y="8.6" width="1.2" height="1.2" fill="#d6ea70" opacity="0.8"/><rect x="20.0" y="8.6" width="1.2" height="1.2" fill="#d6ea70" opacity="0.8"/><rect x="22.0" y="8.6" width="1.2" height="1.2" fill="#d6ea70" opacity="0.8"/><rect x="24.0" y="8.6" width="1.2" height="1.2" fill="#d6ea70" opacity="0.8"/><rect x="10.0" y="10.6" width="1.2" height="1.2" fill="#d6ea70" opacity="0.95"/><rect x="12.0" y="10.6" width="1.2" height="1.2" fill="#d6ea70" opacity="0.95"/><rect x="14.0" y="10.6" width="1.2" height="1.2" fill="#d6ea70" opacity="0.95"/><rect x="16.0" y="10.6" width="1.2" height="1.2" fill="#d6ea70" opacity="0.95"/><rect x="18.0" y="10.6" width="1.2" height="1.2" fill="#d6ea70" opacity="0.95"/><rect x="20.0" y="10.6" width="1.2" height="1.2" fill="#d6ea70" opacity="0.95"/><rect x="22.0" y="10.6" width="1.2" height="1.2" fill="#d6ea70" opacity="0.95"/><rect x="24.0" y="10.6" width="1.2" height="1.2" fill="#d6ea70" opacity="0.95"/><rect x="10.0" y="12.6" width="1.2" height="1.2" fill="#cfe562" opacity="0.95"/><rect x="12.0" y="12.6" width="1.2" height="1.2" fill="#cfe562" opacity="0.95"/><rect x="14.0" y="12.6" width="1.2" height="1.2" fill="#cfe562" opacity="0.95"/><rect x="16.0" y="12.6" width="1.2" height="1.2" fill="#2a6a5a" opacity="0.95"/><rect x="18.0" y="12.6" width="1.2" height="1.2" fill="#2a6a5a" opacity="0.95"/><rect x="20.0" y="12.6" width="1.2" height="1.2" fill="#cfe562" opacity="0.95"/><rect x="22.0" y="12.6" width="1.2" height="1.2" fill="#cfe562" opacity="0.95"/><rect x="24.0" y="12.6" width="1.2" height="1.2" fill="#cfe562" opacity="0.95"/><rect x="10.0" y="14.6" width="1.2" height="1.2" fill="#cfe562" opacity="0.9"/><rect x="12.0" y="14.6" width="1.2" height="1.2" fill="#cfe562" opacity="0.9"/><rect x="14.0" y="14.6" width="1.2" height="1.2" fill="#2c7a44" opacity="0.9"/><rect x="16.0" y="14.6" width="1.2" height="1.2" fill="#2c7a44" opacity="0.9"/><rect x="18.0" y="14.6" width="1.2" height="1.2" fill="#2c7a44" opacity="0.9"/><rect x="20.0" y="14.6" width="1.2" height="1.2" fill="#2c7a44" opacity="0.9"/><rect x="22.0" y="14.6" width="1.2" height="1.2" fill="#2c7a44" opacity="0.9"/><rect x="24.0" y="14.6" width="1.2" height="1.2" fill="#2c7a44" opacity="0.9"/><rect x="10.0" y="16.6" width="1.2" height="1.2" fill="#1d3c78" opacity="0.4"/><rect x="12.0" y="16.6" width="1.2" height="1.2" fill="#1d3c78" opacity="0.95"/><rect x="14.0" y="16.6" width="1.2" height="1.2" fill="#1d3c78" opacity="0.95"/><rect x="16.0" y="16.6" width="1.2" height="1.2" fill="#1d3c78" opacity="0.95"/><rect x="18.0" y="16.6" width="1.2" height="1.2" fill="#17553c" opacity="0.95"/><rect x="20.0" y="16.6" width="1.2" height="1.2" fill="#17553c" opacity="0.95"/><rect x="22.0" y="16.6" width="1.2" height="1.2" fill="#17553c" opacity="0.95"/><rect x="24.0" y="16.6" width="1.2" height="1.2" fill="#17553c" opacity="0.95"/><rect x="10.0" y="18.6" width="1.2" height="1.2" fill="#1d3c78" opacity="0.95"/><rect x="12.0" y="18.6" width="1.2" height="1.2" fill="#1d3c78" opacity="0.95"/><rect x="14.0" y="18.6" width="1.2" height="1.2" fill="#1d3c78" opacity="0.95"/><rect x="16.0" y="18.6" width="1.2" height="1.2" fill="#1d3c78" opacity="0.95"/><rect x="18.0" y="18.6" width="1.2" height="1.2" fill="#17553c" opacity="0.95"/><rect x="20.0" y="18.6" width="1.2" height="1.2" fill="#17553c" opacity="0.95"/><rect x="22.0" y="18.6" width="1.2" height="1.2" fill="#17553c" opacity="0.95"/><rect x="24.0" y="18.6" width="1.2" height="1.2" fill="#17553c" opacity="0.95"/><rect x="10.0" y="20.6" width="1.2" height="1.2" fill="#1d3c78" opacity="0.5"/><rect x="12.0" y="20.6" width="1.2" height="1.2" fill="#1d3c78" opacity="0.95"/><rect x="14.0" y="20.6" width="1.2" height="1.2" fill="#1d3c78" opacity="0.95"/><rect x="16.0" y="20.6" width="1.2" height="1.2" fill="#1d3c78" opacity="0.95"/><rect x="18.0" y="20.6" width="1.2" height="1.2" fill="#17553c" opacity="0.95"/><rect x="20.0" y="20.6" width="1.2" height="1.2" fill="#17553c" opacity="0.95"/><rect x="22.0" y="20.6" width="1.2" height="1.2" fill="#17553c" opacity="0.95"/><rect x="24.0" y="20.6" width="1.2" height="1.2" fill="#17553c" opacity="0.95"/><rect x="10.0" y="22.6" width="1.2" height="1.2" fill="#2a4c8c" opacity="0.15"/><rect x="12.0" y="22.6" width="1.2" height="1.2" fill="#2a4c8c" opacity="0.35"/><rect x="14.0" y="22.6" width="1.2" height="1.2" fill="#2a4c8c" opacity="0.35"/><rect x="16.0" y="22.6" width="1.2" height="1.2" fill="#2a4c8c" opacity="0.35"/><rect x="18.0" y="22.6" width="1.2" height="1.2" fill="#2a4c8c" opacity="0.35"/><rect x="20.0" y="22.6" width="1.2" height="1.2" fill="#2a4c8c" opacity="0.35"/><rect x="22.0" y="22.6" width="1.2" height="1.2" fill="#2a4c8c" opacity="0.35"/><rect x="24.0" y="22.6" width="1.2" height="1.2" fill="#2a4c8c" opacity="0.35"/></g>
<!-- window controls -->
<rect x="1177" y="1" width="45" height="19" fill="#c75050"/>
<path d="M1196.3 7.3 L1203.700 14.700 M1203.700 7.300 L1196.300 14.700" stroke="#fff" stroke-width="1.6" fill="none"/>
<rect x="1159.500" y="8" width="9" height="6.500" fill="none" stroke="#1a1a1a" stroke-width="1"/><rect x="1159" y="7" width="10" height="2" fill="#1a1a1a"/>
<rect x="1133" y="12.500" width="8" height="2.300" fill="#1a1a1a"/>
<!-- chart type icons -->
<g shape-rendering="crispEdges">
 <rect x="37" y="53" width="1" height="16" fill="#c02070"/><rect x="36" y="56" width="3" height="8" fill="#ff5a00"/>
 <rect x="42" y="53" width="1" height="13" fill="#86a4c6"/><rect x="41" y="54" width="3" height="10" fill="#7f9fc4"/>
 <rect x="46" y="54" width="2" height="9" fill="#a9c4e4"/>
</g>
<g fill="#111">
 <rect x="57.900" y="54.200" width="1.400" height="11.800"/><rect x="56" y="56.100" width="2" height="1.300"/>
 <rect x="63.100" y="53.200" width="1.400" height="12"/><rect x="60.800" y="54.200" width="2.400" height="1.300"/><rect x="64.400" y="62.700" width="1.800" height="1.300"/>
</g>
<path d="M74.800 61 L79.400 58.100 L82.600 61.600 L88.800 56.400" stroke="#4a72b4" stroke-width="1.500" fill="none"/>
<g fill="#666" shape-rendering="crispEdges">
<rect x="94" y="52" width="1" height="17"/><rect x="373" y="52" width="1" height="17"/><rect x="484" y="52" width="1" height="17"/><rect x="574" y="52" width="1" height="17"/><rect x="643" y="52" width="1" height="17"/><rect x="691" y="52" width="1" height="17"/><rect x="760" y="52" width="1" height="17"/>
</g>
<!-- crosshair, grid, info -->
<g fill="#111">
 <rect x="384.600" y="53.100" width="1.500" height="14"/><rect x="380.800" y="60.800" width="14.400" height="1.500"/>
 <rect x="405.600" y="53.900" width="1.500" height="13"/><rect x="411.100" y="53.900" width="1.500" height="13"/><rect x="402.100" y="56.800" width="13.800" height="1.500"/><rect x="402.100" y="63.100" width="13.800" height="1.500"/>
 <rect x="429.300" y="58" width="1.600" height="6"/><rect x="429.200" y="54.700" width="1.700" height="1.700"/><rect x="427.500" y="58" width="2" height="1.100"/><rect x="426.500" y="63.400" width="7.300" height="1.300"/>
 <path d="M444.800 59.600 l3.400 -2.900 v5.800z M457.400 59.600 l-3.400 -2.900 v5.800z"/>
</g>
<g fill="#999"><rect x="449.700" y="59.100" width="1" height="1"/><rect x="451.800" y="59.100" width="1" height="1"/></g>
<text x="465.900" y="60" font-family="Liberation Sans, Arial, sans-serif" font-size="8.600" font-weight="bold" fill="#111">vol</text>
<g fill="#2444a8"><rect x="466" y="63.500" width="12" height="1.800"/><rect x="467" y="62" width="1.500" height="1.500"/><rect x="470" y="62" width="1.500" height="1.500"/><rect x="473" y="62" width="1.500" height="1.500"/><rect x="476" y="62" width="1.500" height="1.500"/></g>
<rect x="466" y="66.500" width="12" height="1" fill="#f3e9b0" opacity="0.8"/>
<!-- line tools -->
<g stroke="#111" stroke-width="1.500" fill="none">
 <path d="M495 53.900 V66.900 M492.200 56.600 h2.800"/><path d="M495.500 63.700 L506 58.800" stroke-width="1.100"/>
 <path d="M516.100 53.900 V66.900 M513.300 56.500 h2.800 M516.100 63.300 h2.500"/><path d="M516.500 55.500 L528.300 61.200" stroke-width="1"/>
 <path d="M536.900 53.900 V66.900 M544.600 53.900 V66.900 M534 59.600 h13.500" /><path d="M534 56.700 h3 M537 63.300 h3 M544.600 63.300 h3" stroke-width="1.200"/>
 <path d="M555.600 55.100 L562.500 59.500" stroke-width="1.100"/>
</g>
<path d="M565.600 57.300 L561.300 66.200 L560.200 65.400 L561.900 61.300 L558.700 60.200Z" fill="#111"/>
<!-- disabled tools -->
<g stroke="#a2a2a2" fill="none"><path d="M582.500 62 L595.100 55.100 M584.100 65.300 L595.500 60" stroke-width="1.500"/><path d="M604.800 55.100 L615.100 64.900 M615.100 55.100 L604.800 64.900" stroke="#959595" stroke-width="2.900"/></g>
<g fill="#8c8c8c" font-family="Liberation Sans, Arial, sans-serif"><path d="M625 53.800 l4.400 4.200 M629.400 53.800 l-4.400 4.200" stroke="#8c8c8c" stroke-width="1.300"/><text x="628.300" y="66" font-size="8.200" fill="#777">all</text></g>
<!-- print / preview -->
<g fill="none" stroke="#111" stroke-width="1.600"><rect x="652.900" y="59.700" width="9.800" height="3.600"/><path d="M655.200 59.700 v-3.800 h5.200 v3.800"/></g><rect x="656.300" y="57.400" width="3" height="1" fill="#111"/>
<g fill="none" stroke="#555" stroke-width="1.100"><path d="M674.600 54.800 h5 v3 M674.600 54.800 v11.500 h4"/></g>
<g fill="none" stroke="#222" stroke-width="1.300"><circle cx="680.200" cy="61.600" r="2.600"/><path d="M682.200 63.600 l3.400 3.200" stroke-width="1.600"/></g>
<!-- zoom -->
<g fill="none" stroke="#333" stroke-width="1.150"><circle cx="706.700" cy="57.600" r="2.800"/><path d="M708.800 59.700 l3.800 3.400" stroke-width="1.500"/><circle cx="727.400" cy="57.600" r="2.800"/><path d="M729.500 59.700 l3.800 3.400" stroke-width="1.500"/></g>
<path d="M699.700 63.300 h5 M702.200 60.800 v5" stroke="#f06a00" stroke-width="1.300"/>
<path d="M721.300 63.300 h5" stroke="#4a78c8" stroke-width="1.300" stroke-dasharray="2 1"/>
<g fill="#6a6a6a"><rect x="740.900" y="54" width="14.200" height="1.600"/><rect x="740.900" y="65" width="14.200" height="1.600"/><rect x="744.500" y="60.200" width="6.600" height="1"/><path d="M747.800 57 l2.200 2.300 h-4.400z M747.800 64 l2.200 -2.300 h-4.400z"/></g>
<!-- pin -->
<path d="M1208.200 56.600 L1211 59.800 L1208.200 63.200 M1211 59.800 L1216.300 56.300 V63.400 Z" fill="#f1f1f4" stroke="#7d8792" stroke-width="0.900"/>
<!-- status bar -->
<rect x="12.500" y="771" width="11.500" height="11.800" fill="#2f61a0"/><path d="M18.500 771.500 v11 M13 777 h11" stroke="#6a94c6" stroke-width="0.700"/>
<rect x="26" y="768" width="1" height="21" fill="#7a7a7a" shape-rendering="crispEdges"/>
<rect x="198" y="768" width="1" height="19" fill="#777" shape-rendering="crispEdges"/>
<g fill="none" stroke="#444" stroke-width="1.200"><circle cx="39.600" cy="774.200" r="3"/><path d="M37.400 776.500 l-3.800 4.200" stroke-width="1.800"/></g>
<g fill="#444"><rect x="40" y="780.700" width="1.200" height="1.200"/><rect x="42.100" y="780.700" width="1.200" height="1.200"/><rect x="44.200" y="780.700" width="1.200" height="1.200"/></g>
</svg>

</body></html>
